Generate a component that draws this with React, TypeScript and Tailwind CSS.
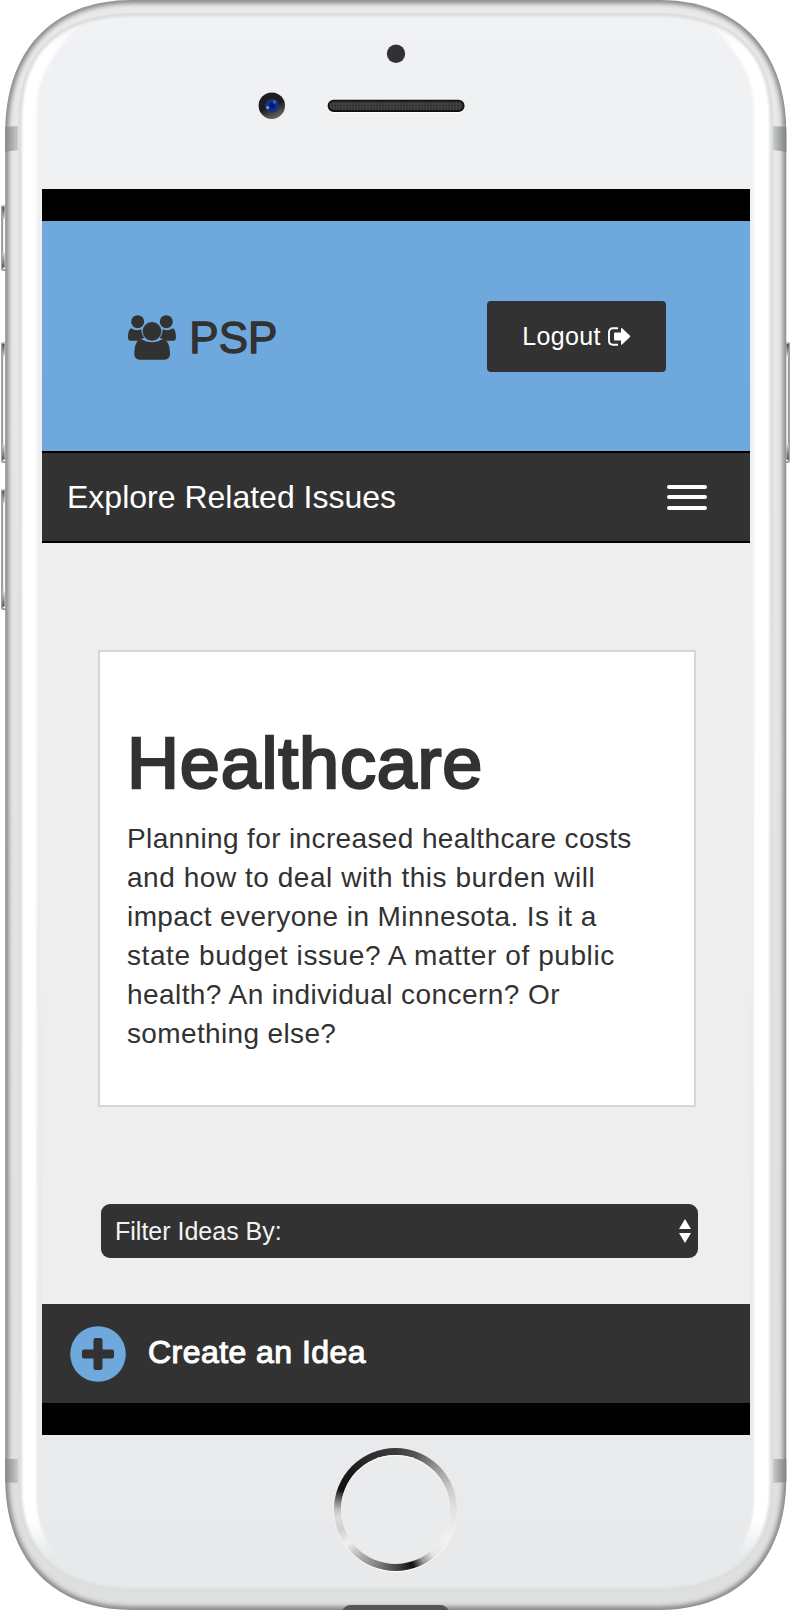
const PARAGRAPH = [
  { text: "Planning for increased healthcare costs", tracking: "tracking-[0.37px]" },
  { text: "and how to deal with this burden will", tracking: "tracking-[0.54px]" },
  { text: "impact everyone in Minnesota. Is it a", tracking: "tracking-[0.41px]" },
  { text: "state budget issue? A matter of public", tracking: "tracking-[0.59px]" },
  { text: "health? An individual concern? Or", tracking: "tracking-[0.43px]" },
  { text: "something else?", tracking: "tracking-[0.36px]" },
];

const GLASS =
  "M136 13.5H655C733 13.5 772.5 50 772.5 120V1488C772.5 1556 729 1591 655 1591H136C62 1591 19 1556 19 1488V120C19 50 58 13.5 136 13.5Z";
const BODY =
  "M132 0H659C741 0 786.3 53 786.3 132V1478C786.3 1557 741 1610 659 1610H132C50 1610 5.2 1557 5.2 1478V132C5.2 53 50 0 132 0Z";
const FACE =
  "M118 13H673C690 13 708 20 726 41C745 64 754 84 754 112V1498C754 1524 744 1548 728 1567C712 1584 690 1592 659 1592H132C101 1592 79 1584 63 1567C47 1548 36.5 1524 36.5 1498V112C36.5 84 46 64 65 41C83 20 101 13 118 13Z";

function SideButton({ x, y, h, flip }: { x: number; y: number; h: number; flip?: boolean }) {
  return (
    <g transform={flip ? `translate(${x + 7} ${y}) scale(-1 1)` : `translate(${x} ${y})`}>
      <rect x="0.5" y="0" width="7" height={h} rx="2" fill="#b9babb" />
      <rect x="2.2" y="2" width="2.6" height={h - 4} rx="1" fill="#f8f9fa" />
      <rect x="0.2" y="0.5" width="1.6" height={h - 1} rx="0.8" fill="#9b9490" />
      <rect x="1.4" y="2" width="2.2" height="12" fill="url(#btnTop)" />
      <rect x="1.4" y={h - 19} width="2.2" height="16" fill="url(#btnBottom)" />
      <rect x="2" y={h - 3.5} width="5" height="1.8" fill="#f3f3f3" />
      <rect x="2" y={h - 1.5} width="5" height="1.3" rx="0.6" fill="#8c7f7a" />
    </g>
  );
}

function PhoneShell() {
  return (
    <svg className="absolute inset-0" width="790" height="1611" viewBox="0 0 790 1611" aria-hidden="true">
      <defs>
        <linearGradient id="faceFill" x1="0" y1="0" x2="0" y2="1">
          <stop offset="0" stopColor="#f1f2f4" />
          <stop offset="1" stopColor="#e7e9eb" />
        </linearGradient>
        <linearGradient id="shellFill" x1="0" y1="0" x2="0" y2="1">
          <stop offset="0" stopColor="#e9e9e8" />
          <stop offset="1" stopColor="#dedfdf" />
        </linearGradient>
        <linearGradient id="whiteFade" gradientUnits="userSpaceOnUse" x1="0" y1="14" x2="0" y2="1591">
          <stop offset="0" stopColor="#f0f1f3" />
          <stop offset="0.022" stopColor="#ffffff" />
          <stop offset="0.955" stopColor="#ffffff" />
          <stop offset="0.978" stopColor="#e7e9eb" />
        </linearGradient>
        <linearGradient id="bandL">
          <stop offset="0" stopColor="#85878a" />
          <stop offset="1" stopColor="#c9cbcc" />
        </linearGradient>
        <linearGradient id="bandR">
          <stop offset="0" stopColor="#c9cbcc" />
          <stop offset="1" stopColor="#7c7e80" />
        </linearGradient>
        <linearGradient id="btnTop" x1="0" y1="0" x2="0" y2="1">
          <stop offset="0" stopColor="#444" />
          <stop offset="1" stopColor="#ccc" />
        </linearGradient>
        <linearGradient id="btnBottom" x1="0" y1="0" x2="0" y2="1">
          <stop offset="0" stopColor="#ddd" />
          <stop offset="1" stopColor="#444" />
        </linearGradient>
        <radialGradient id="lens" cx="0.5" cy="0.5" r="0.5">
          <stop offset="0" stopColor="#020a52" />
          <stop offset="0.5" stopColor="#0d2a86" />
          <stop offset="1" stopColor="#1f3879" />
        </radialGradient>
        <linearGradient id="lensRim" x1="0.3" y1="0" x2="0.75" y2="1">
          <stop offset="0.5" stopColor="#1d1c1e" />
          <stop offset="1" stopColor="#77716f" />
        </linearGradient>
        <pattern id="mesh" width="3" height="3" patternUnits="userSpaceOnUse">
          <rect width="3" height="3" fill="#3a3a3a" />
          <rect width="1" height="3" fill="#4a4a4a" />
          <rect width="3" height="1" fill="#2c2c2c" opacity="0.7" />
        </pattern>
        <filter id="soft" x="-5%" y="-5%" width="110%" height="110%">
          <feGaussianBlur stdDeviation="2.6" />
        </filter>
        <filter id="soft1" x="-5%" y="-5%" width="110%" height="110%">
          <feGaussianBlur stdDeviation="1.2" />
        </filter>
        <clipPath id="bodyClip">
          <path d={BODY} />
        </clipPath>
        <clipPath id="glassClip">
          <path d={GLASS} />
        </clipPath>
      </defs>

      <SideButton x={1} y={205} h={66} />
      <SideButton x={1} y={342} h={121} />
      <SideButton x={1} y={489} h={121} />
      <SideButton x={783} y={342} h={121} flip />

      <g clipPath="url(#bodyClip)">
        <path d={BODY} fill="url(#shellFill)" />
        <path d={BODY} fill="none" stroke="#7a7978" strokeWidth="6" filter="url(#soft)" />
        <path d="M5 127L18 126V150L5 152Z" fill="url(#bandL)" />
        <path d="M787 127L773 126V150L787 152Z" fill="url(#bandR)" />
        <path d="M5 1459H18V1483L5 1482Z" fill="url(#bandL)" />
        <path d="M787 1459H773V1483L787 1482Z" fill="url(#bandR)" />
        <path d="M342 1611C344 1607 347 1605 351 1605H440C444 1605 447 1607 449 1611Z" fill="#575553" />
      </g>
      <g clipPath="url(#glassClip)">
        <path d={GLASS} fill="url(#whiteFade)" />
        <path d={FACE} fill="url(#faceFill)" filter="url(#soft1)" />
        <path d={GLASS} fill="none" stroke="#dcdee0" strokeWidth="6" filter="url(#soft1)" />
      </g>
      <path d={GLASS} fill="none" stroke="#d8dada" strokeWidth="0.8" />

      <circle cx="396" cy="53.7" r="9.2" fill="#313134" />
      <circle cx="271.8" cy="105.7" r="13.2" fill="url(#lensRim)" />
      <circle cx="272" cy="105.7" r="7" fill="url(#lens)" />
      <circle cx="267.7" cy="107.5" r="1.5" fill="#7fa0d8" />
      <circle cx="274.5" cy="102" r="1.7" fill="#3d5fb4" />
      <rect x="327" y="100" width="138" height="13" rx="6.5" fill="#fff" />
      <rect x="328.5" y="100.7" width="135.2" height="10.3" rx="5.1" fill="url(#mesh)" stroke="#111" strokeWidth="1.8" />
    </svg>
  );
}

function TeamIcon() {
  return (
    <svg width="48.3" height="45.3" viewBox="384 106 145 136" fill="#323232" aria-hidden="true">
      <path d="M393 146C404 153 414 153 424 149C424 160 428 168 434 174C426 176 421 179 417 183H393C387 183 384 180 384 174C384 160 386 150 393 146Z" />
      <path d="M519 146C508 153 498 153 488 149C488 160 484 168 478 174C486 176 491 179 495 183H519C525 183 528 180 528 174C528 160 526 150 519 146Z" />
      <circle cx="456" cy="155" r="30.5" fill="#6fa8dc" />
      <circle cx="413" cy="126" r="19.5" />
      <circle cx="499" cy="126" r="19.5" />
      <circle cx="456" cy="155" r="28" />
      <path d="M425 179C444 191 468 191 487 179C502 180 510 195 510 222C510 234 503 240 492 240H421C410 240 403 234 403 222C403 195 411 180 425 179Z" />
    </svg>
  );
}

function LogoutIcon() {
  return (
    <svg width="23" height="19" viewBox="0 0 23 19" aria-hidden="true">
      <path d="M10 1.3H5C2.4 1.3 1 2.7 1 5.2V13.8C1 16.3 2.4 17.7 5 17.7H10" fill="none" stroke="#fff" strokeWidth="1.9" />
      <path d="M6 6.4Q6 5.6 6.8 5.6H13V1.6Q13.2 .7 14.1 1.3L22 8.8Q22.6 9.5 22 10.1L14.1 17.6Q13.2 18.2 13 17.3V13.4H6.8Q6 13.4 6 12.6Z" fill="#fff" />
    </svg>
  );
}

export default function App() {
  return (
    <div className="relative h-[1611px] w-[790px] overflow-hidden bg-white font-['Liberation_Sans',Arial,sans-serif] text-[#323232]">
      <PhoneShell />
      <div className="relative flex flex-col items-center pt-[189px]">
        <main className="mr-[-2px] flex h-[1246px] w-[708px] flex-col bg-[#eeeeee]">
          <div className="h-8 shrink-0 bg-black" />
          <header className="flex h-[230px] shrink-0 justify-between bg-[#6fa8dc] pl-[86px] pr-[84px]">
            <div className="flex h-[47px] items-start pt-[94px]">
              <TeamIcon />
              <span className="ml-[13px] mt-[-2px] text-[44px] leading-[50px] [-webkit-text-stroke:1.3px_#323232]">PSP</span>
            </div>
            <button className="mt-[80px] flex h-[71px] w-[179px] items-center justify-center gap-[7px] rounded-[4px] bg-[#323232] text-[25px] text-white">
              <span className="pt-px tracking-[0.3px]">Logout</span>
              <LogoutIcon />
            </button>
          </header>
          <nav className="flex h-[92px] shrink-0 items-center justify-between border-y-2 border-black bg-[#323232] pl-[25px] pr-[43px] text-white">
            <span className="text-[32px] leading-[40px]">Explore Related Issues</span>
            <span className="flex w-10 flex-col gap-[6.5px]">
              <span className="h-1 rounded-full bg-white" />
              <span className="h-1 rounded-full bg-white" />
              <span className="h-1 rounded-full bg-white" />
            </span>
          </nav>
          <section className="ml-[56px] mt-[107px] h-[457px] w-[598px] shrink-0 border-2 border-[#d6d6d6] bg-white pl-[27px] pt-[71px]">
            <h1 className="text-[72px] leading-[80px] tracking-[0.8px] [-webkit-text-stroke:2.5px_#323232]">Healthcare</h1>
            <p className="mt-[16px] whitespace-nowrap text-[28px] leading-[39px]">
              {PARAGRAPH.map(({ text, tracking }) => (
                <span key={text} className={`block ${tracking}`}>
                  {text}
                </span>
              ))}
            </p>
          </section>
          <div className="ml-[59px] mt-[97px] flex h-[54px] w-[597px] shrink-0 items-center justify-between rounded-[9px] bg-[#323232] pl-[14px] pr-[7px] text-[25px] text-[#f3f3f3]">
            <span className="pt-[2px]">Filter Ideas By:</span>
            <svg width="12" height="24" viewBox="0 0 12 24" fill="#fff" aria-hidden="true">
              <path d="M6 0L12 10H0ZM0 14H12L6 24Z" />
            </svg>
          </div>
          <div className="mt-auto flex h-[99px] shrink-0 items-center bg-[#323232] pl-[28px] text-white">
            <svg width="56" height="56" viewBox="0 0 56 56" aria-hidden="true">
              <circle cx="28" cy="28" r="27.8" fill="#6fa8dc" />
              <path d="M28 14.5V41.5M14.5 28H41.5" stroke="#323232" strokeWidth="9" />
              <path d="M25.5 14H30.5M25.5 42H30.5M14 25.5V30.5M42 25.5V30.5" stroke="#323232" strokeWidth="4" strokeLinecap="round" />
            </svg>
            <span className="mb-[3px] ml-[22px] text-[32px] leading-[40px] tracking-[0.45px] [-webkit-text-stroke:1.1px_white]">Create an Idea</span>
          </div>
          <div className="h-8 shrink-0 bg-black" />
        </main>
        <div className="mt-[12.5px] rounded-full bg-[conic-gradient(#3a3a3c_0deg,#555_20deg,#999_45deg,#ccc_70deg,#e2e2e2_90deg,#f2f2f2_120deg,#e6e6e6_140deg,#999_152deg,#111_163deg,#444_178deg,#777_195deg,#aaa_215deg,#f0f0f0_235deg,#cfcfcf_250deg,#ddd_262deg,#c0c0c0_270deg,#888_277deg,#111_290deg,#1a1a1c_310deg,#2a2a2c_330deg,#3a3a3c_360deg)] p-[7px] shadow-[0_1px_1px_#fff]">
          <div className="h-[109px] w-[109px] rounded-full bg-[#e9ebed] shadow-[inset_0_1px_1px_#fff]" />
        </div>
      </div>
    </div>
  );
}
